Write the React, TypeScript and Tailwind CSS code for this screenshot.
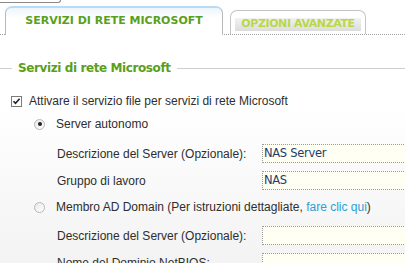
import React from "react";

const tahoma = { fontFamily: '"DejaVu Sans", Verdana, sans-serif' };

function Checkbox() {
  return (
    <div className="w-[11px] h-[11px] border border-[#7a7a7a] bg-white flex items-center justify-center shrink-0">
      <svg width="9" height="9" viewBox="0 0 9 9">
        <path d="M1.5 4.2 L3.5 6.3 L7.6 1.8" stroke="#222" strokeWidth="1.6" fill="none" />
      </svg>
    </div>
  );
}

function Radio({ checked }: { checked?: boolean }) {
  return (
    <div className="w-[11px] h-[11px] rounded-full border border-[#b8b8b8] bg-gradient-to-br from-[#e8e8e8] to-white flex items-center justify-center shrink-0">
      {checked && <div className="w-[4px] h-[4px] rounded-full bg-[#222]" />}
    </div>
  );
}

function Field({ label, value }: { label: string; value?: string }) {
  return (
    <div className="flex items-center h-[27px]">
      <div className="w-[205px] shrink-0">{label}</div>
      <div
        className="w-[160px] h-[19px] border border-dotted border-[#9a9a9a] bg-[#fffff4] text-[#1d3b6b] text-[11.5px] leading-[17px] pl-[1px] shrink-0 tracking-[-0.3px]"
        style={tahoma}
      >
        {value}
      </div>
    </div>
  );
}

export default function App() {
  return (
    <div
      className="w-[405px] h-[263px] overflow-hidden relative bg-gradient-to-b from-white from-40% to-[#f3f3f3]"
      style={{ fontFamily: '"Liberation Sans", Arial, sans-serif' }}
    >
      {/* top decoration */}
      <div className="w-[61px] h-[3px] border-b border-r border-[#8a8a8a] rounded-br-[5px]" />

      {/* tabs */}
      <div className="flex items-end h-[32px] pl-[5px] border-b border-dotted border-[#a0a0a0]">
        <div className="relative w-[218px] h-[29px] -mb-px rounded-t-[7px] border border-[#b8b8b8] border-b-0 border-t-[2px] border-t-[#b9dcf6] bg-gradient-to-b from-[#eef6fc] to-white to-40% flex items-center justify-center">
          <span className="text-[11px] font-bold text-[#5a9f1b] tracking-[0px]" style={tahoma}>
            SERVIZI DI RETE MICROSOFT
          </span>
        </div>
        <div className="ml-[7px] w-[136px] h-[24px] rounded-t-[7px] border border-[#c4c4c4] border-b-0 bg-white px-[4px] pt-[7px]">
          <div className="h-[13px] bg-gradient-to-b from-[#f2f2f2] to-[#dcdcdc] flex items-center justify-center">
            <span className="text-[11px] font-bold text-[#b9d748] tracking-[-0.4px]" style={tahoma}>
              OPZIONI AVANZATE
            </span>
          </div>
        </div>
      </div>

      {/* fieldset legend */}
      <div className="flex items-center mt-[26px] h-[14px]">
        <div className="w-[12px] h-px bg-[#cfcfcf]" />
        <div className="px-[6px] text-[12px] font-bold text-[#5a9f1b] tracking-[-0.4px]" style={tahoma}>
          Servizi di rete Microsoft
        </div>
        <div className="flex-1 h-px bg-[#cfcfcf]" />
      </div>

      <div className="text-[12px] text-[#2e2e2e] mt-[18px]">
        <div className="flex items-center gap-[7px] pl-[11px] h-[16px]">
          <Checkbox />
          <span>Attivare il servizio file per servizi di rete Microsoft</span>
        </div>
        <div className="flex items-center gap-[11px] pl-[34px] h-[16px] mt-[7px]">
          <Radio checked />
          <span>Server autonomo</span>
        </div>
        <div className="pl-[57px] mt-[8px]">
          <Field label="Descrizione del Server (Opzionale):" value="NAS Server" />
          <Field label="Gruppo di lavoro" value="NAS" />
        </div>
        <div className="flex items-center gap-[11px] pl-[34px] h-[16px] mt-[5px]">
          <Radio />
          <span>
            Membro AD Domain (Per istruzioni dettagliate,{" "}
            <span className="text-[#2a9fd8]">fare clic qui</span>)
          </span>
        </div>
        <div className="pl-[57px] mt-[7px]">
          <Field label="Descrizione del Server (Opzionale):" />
          <Field label="Nome del Dominio NetBIOS:" />
        </div>
      </div>
    </div>
  );
}
